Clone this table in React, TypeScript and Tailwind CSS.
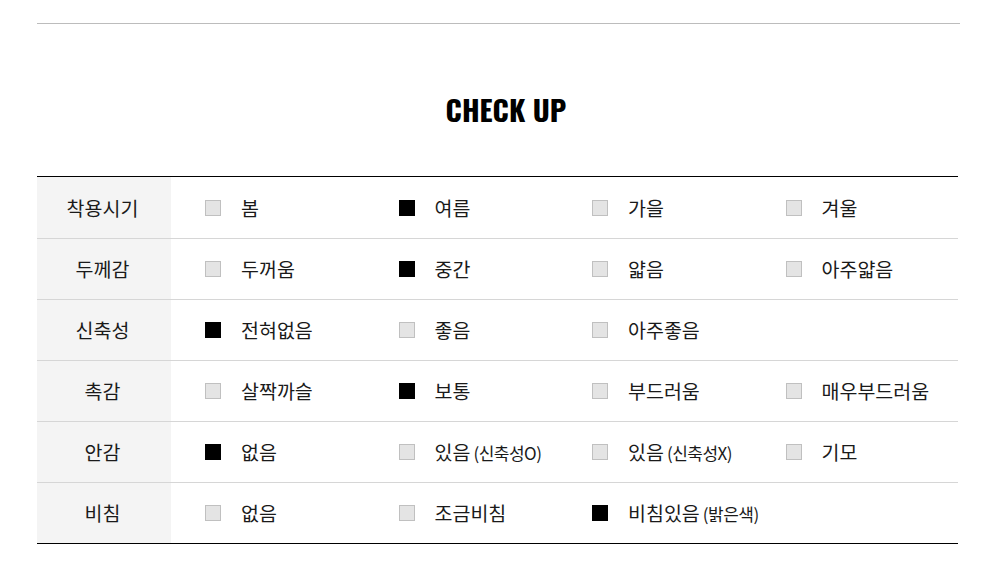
import React from 'react';

type Opt = { label: string; note?: string; checked?: boolean };

const rows: { title: string; options: Opt[] }[] = [
  {
    title: '착용시기',
    options: [{ label: '봄' }, { label: '여름', checked: true }, { label: '가을' }, { label: '겨울' }],
  },
  {
    title: '두께감',
    options: [{ label: '두꺼움' }, { label: '중간', checked: true }, { label: '얇음' }, { label: '아주얇음' }],
  },
  {
    title: '신축성',
    options: [{ label: '전혀없음', checked: true }, { label: '좋음' }, { label: '아주좋음' }],
  },
  {
    title: '촉감',
    options: [{ label: '살짝까슬' }, { label: '보통', checked: true }, { label: '부드러움' }, { label: '매우부드러움' }],
  },
  {
    title: '안감',
    options: [
      { label: '없음', checked: true },
      { label: '있음', note: '(신축성O)' },
      { label: '있음', note: '(신축성X)' },
      { label: '기모' },
    ],
  },
  {
    title: '비침',
    options: [{ label: '없음' }, { label: '조금비침' }, { label: '비침있음', note: '(밝은색)', checked: true }],
  },
];

const Option: React.FC<{ opt: Opt }> = ({ opt }) => (
  <div className="flex items-center pl-[34px] whitespace-nowrap">
    <span
      className={
        opt.checked
          ? 'shrink-0 w-4 h-4 bg-black border border-black'
          : 'shrink-0 w-4 h-4 bg-[#e4e4e4] border border-[#c0c0c0]'
      }
    />
    <span className="ml-5 text-[19.5px] text-[#1a1a1a]">
      {opt.label}
      {opt.note && <span className="ml-[3px] text-[17px] tracking-[-0.5px]">{opt.note}</span>}
    </span>
  </div>
);

export default function App() {
  return (
    <div
      className="w-[1000px] h-[566px] bg-white"
      style={{ fontFamily: '"Noto Sans CJK KR", "Noto Sans", sans-serif' }}
    >
      <div className="pt-[23px] pl-[37px] pr-[40px]">
        <div className="h-px bg-[#bcbcbc]" />
      </div>

      <h2
        className="mt-[66px] h-[36px] flex justify-center items-center text-black font-bold text-[29px] leading-none"
        style={{ fontFamily: '"Oswald", "Liberation Sans Narrow", "DejaVu Sans Condensed", sans-serif' }}
      >
        <span className="inline-block translate-x-[6px]">CHECK UP</span>
      </h2>

      <div className="mt-[50px] mx-[37px] w-[921px] border-t border-b border-black">
        {rows.map((row, i) => (
          <div
            key={row.title}
            className={
              'grid grid-cols-[134px_repeat(4,193.5px)] h-[61px] ' +
              (i > 0 ? 'border-t border-[#d6d6d6]' : '')
            }
          >
            <div className="flex items-center justify-center bg-[#f4f4f4] text-[19.5px] text-[#1a1a1a] pr-[3px]">
              {row.title}
            </div>
            {row.options.map((opt, j) => (
              <Option key={j} opt={opt} />
            ))}
          </div>
        ))}
      </div>
    </div>
  );
}
